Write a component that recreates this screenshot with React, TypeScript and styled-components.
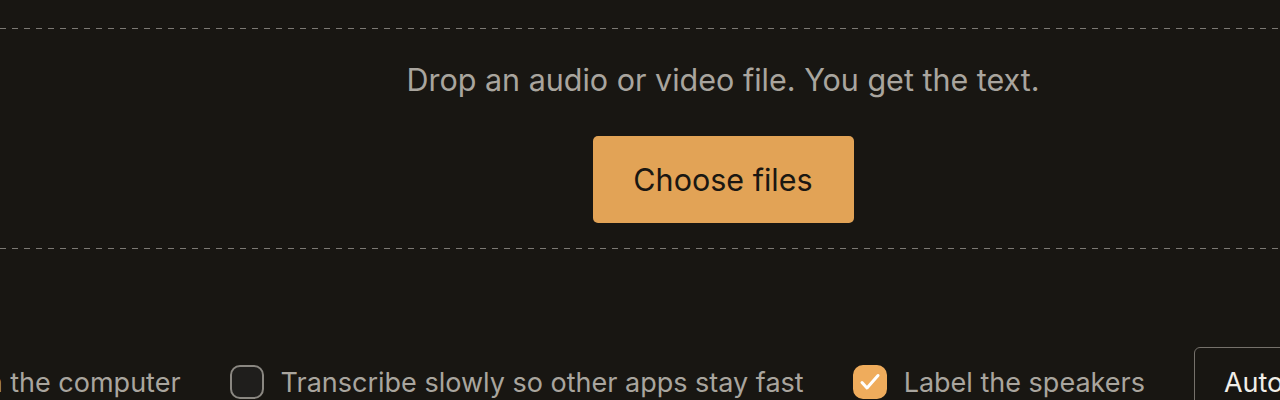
import React, { useState } from "react";
import styled, { createGlobalStyle } from "styled-components";

const Global = createGlobalStyle`
  html, body {
    margin: 0;
    padding: 0;
    background: #181612;
    overflow: hidden;
  }
  body {
    font-family: Inter, "Noto Sans", "Liberation Sans", sans-serif;
  }
`;

const Page = styled.div`
  width: 1518px;
  margin-left: -36px;
  padding-top: 28px;
  box-sizing: border-box;
`;

const Dropzone = styled.section`
  display: flex;
  flex-direction: column;
  align-items: center;
  padding: 31px 0 26px;
  background-image: repeating-linear-gradient(
      to right,
      #7b7873 0 6px,
      transparent 6px 12px
    ),
    repeating-linear-gradient(to right, #7b7873 0 6px, transparent 6px 12px);
  background-size: 100% 1px, 100% 1px;
  background-position: left top, left bottom;
  background-repeat: no-repeat;
`;

const Hint = styled.p`
  margin: 0;
  font-size: 30.5px;
  line-height: 42px;
  color: #a9a59e;
`;

const ChooseButton = styled.button`
  margin-top: 35px;
  width: 261px;
  height: 87px;
  border: none;
  border-radius: 5px;
  background: #e2a356;
  color: #1a1712;
  font-family: inherit;
  font-size: 30.5px;
  cursor: pointer;
`;

const OptionsRow = styled.div`
  display: flex;
  align-items: center;
  gap: 49px;
  margin-top: 98px;
  margin-left: -176px;
  white-space: nowrap;
`;

const Option = styled.label`
  display: flex;
  align-items: center;
  gap: 17px;
  font-size: 27px;
  color: #a9a59e;
  cursor: pointer;
`;

const Box = styled.span<{ $checked: boolean }>`
  display: flex;
  align-items: center;
  justify-content: center;
  width: 34px;
  height: 34px;
  box-sizing: border-box;
  border-radius: 10px;
  border: 2px solid ${(p) => (p.$checked ? "#efac5c" : "#8a8781")};
  background: ${(p) => (p.$checked ? "#efac5c" : "#1f1e1c")};
  flex-shrink: 0;
`;

const SelectButton = styled.button`
  height: 70px;
  padding: 0 29px;
  border: 1px solid #75716b;
  border-radius: 6px;
  background: transparent;
  color: #f1eee8;
  font-family: inherit;
  font-size: 27px;
  cursor: pointer;
`;

function Check({ checked }: { checked: boolean }) {
  return (
    <Box $checked={checked}>
      {checked && (
        <svg width="24" height="24" viewBox="0 0 24 24" fill="none">
          <path
            d="M4 12.5l5 5.5L20 5.5"
            stroke="#fff"
            strokeWidth="3"
            strokeLinecap="round"
            strokeLinejoin="round"
          />
        </svg>
      )}
    </Box>
  );
}

export default function App() {
  const [opts, setOpts] = useState([true, false, true]);
  const labels = [
    "Keep it all on the computer",
    "Transcribe slowly so other apps stay fast",
    "Label the speakers",
  ];
  return (
    <>
      <Global />
      <Page>
        <Dropzone>
          <Hint>Drop an audio or video file. You get the text.</Hint>
          <ChooseButton>Choose files</ChooseButton>
        </Dropzone>
        <OptionsRow>
          {labels.map((l, i) => (
            <Option
              key={l}
              onClick={() =>
                setOpts((o) => o.map((v, j) => (j === i ? !v : v)))
              }
            >
              <Check checked={opts[i]} />
              {l}
            </Option>
          ))}
          <SelectButton>Auto-detect language</SelectButton>
        </OptionsRow>
      </Page>
    </>
  );
}
